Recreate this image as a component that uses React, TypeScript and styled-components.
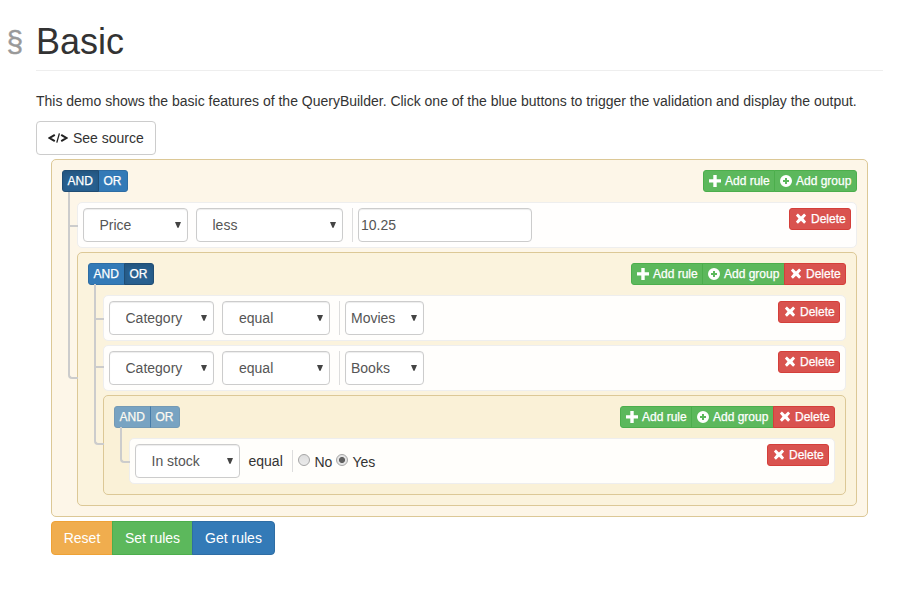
import React, { useState } from "react";
import styled, { createGlobalStyle, css } from "styled-components";

const GlobalStyle = createGlobalStyle`
  *, *::before, *::after { box-sizing: border-box; }
  body {
    margin: 0;
    background: #fff;
    color: #333;
    font: 14px/20px "Liberation Sans", Arial, sans-serif;
  }
  button, input, select { font: inherit; }
`;

const Page = styled.main`
  width: 898px;
  padding: 21px 15px 37px 36px;
`;

const Title = styled.h1`
  position: relative;
  margin: 0;
  height: 50px;
  width: 847px;
  border-bottom: 1px solid #eee;
  font-size: 36px;
  font-weight: 400;
  line-height: 41px;
`;

const Anchor = styled.span`
  position: absolute;
  left: -29.5px;
  top: 0;
  color: #999;
  font-size: 30px;
  -webkit-text-stroke: 0.4px #999;
`;

const Intro = styled.p`
  margin: 20px 0 10px;
  letter-spacing: -0.008px;
  white-space: nowrap;
`;

const SourceButton = styled.button`
  display: flex;
  align-items: center;
  gap: 5px;
  width: 120px;
  height: 34px;
  padding: 0 0 0 11px;
  border: 1px solid #ccc;
  border-radius: 4px;
  background: #fff;
  color: #333;
  white-space: nowrap;
`;

const Builder = styled.div`
  width: 817px;
  margin: 4px 0 4px 15px;
`;

const connector = css`
  position: relative;
  &::before,
  &::after {
    content: "";
    position: absolute;
    left: -10px;
    width: 10px;
    height: calc(50% + 4px);
    border: 0 solid #ccc;
  }
  &::before {
    top: -4px;
    border-width: 0 0 2px 2px;
  }
  &::after {
    top: 50%;
    border-left-width: 2px;
  }
  &:first-child::before {
    top: -12px;
    height: calc(50% + 14px);
  }
  &:last-child::before {
    border-radius: 0 0 0 4px;
  }
  &:last-child::after {
    display: none;
  }
`;

const GroupBox = styled.section<{ $nested?: boolean }>`
  padding: 10px;
  border: 1px solid #dcc896;
  border-radius: 5px;
  background: rgba(250, 240, 210, 0.5);
  ${(p) => p.$nested && connector}
`;

const RootGroup = styled(GroupBox)`
  background: #fdf6e8;
`;

const GroupHeader = styled.header`
  display: flex;
  justify-content: space-between;
  height: 22px;
  margin-bottom: 10px;
`;

const RuleList = styled.div`
  display: flex;
  flex-direction: column;
  gap: 4px;
  padding-left: 15px;
`;

const RuleBox = styled.div`
  ${connector}
  display: flex;
  align-items: flex-start;
  height: 46px;
  padding: 5px;
  border: 1px solid #eee;
  border-radius: 5px;
  background: rgba(255, 255, 255, 0.9);
`;

const ButtonGroup = styled.div<{ $radius: number }>`
  display: flex;
  & > * + * {
    margin-left: -1px;
  }
  & > * {
    border-radius: 0;
  }
  & > :first-child {
    border-radius: ${(p) => p.$radius}px 0 0 ${(p) => p.$radius}px;
  }
  & > :last-child {
    border-radius: 0 ${(p) => p.$radius}px ${(p) => p.$radius}px 0;
  }
`;

const tones = {
  primary: "background:#337ab7;border-color:#2e6da4;",
  success: "background:#5cb85c;border-color:#4cae4c;",
  danger: "background:#d9534f;border-color:#d43f3a;",
  warning: "background:#f0ad4e;border-color:#eea236;",
};
type Tone = keyof typeof tones;

const SmallButton = styled.button<{ $tone: Tone; $width: number }>`
  position: relative;
  display: flex;
  align-items: center;
  gap: 4px;
  width: ${(p) => p.$width}px;
  height: 22px;
  padding: 0 0 0 5px;
  border: 1px solid;
  color: #fff;
  font-size: 12px;
  line-height: 18px;
  white-space: nowrap;
  -webkit-text-stroke: 0.25px #fff;
  ${(p) => tones[p.$tone]}
`;

const ConditionButton = styled(SmallButton)<{ $active: boolean }>`
  padding: 0 0 0 4.5px;
  ${(p) =>
    p.$active &&
    !p.disabled &&
    "z-index:2;background:#286090;border-color:#204d74;box-shadow:inset 0 3px 5px rgba(0,0,0,.125);"}
  &:disabled {
    opacity: 0.65;
  }
`;

const RuleDelete = styled(SmallButton)`
  margin-left: auto;
  border-radius: 3px;
`;

const ActionButton = styled.button<{ $tone: Tone; $width: number }>`
  width: ${(p) => p.$width}px;
  height: 34px;
  padding: 0;
  border: 1px solid;
  color: #fff;
  white-space: nowrap;
  ${(p) => tones[p.$tone]}
`;

const fieldStyle = css`
  height: 34px;
  border: 1px solid #ccc;
  border-radius: 4px;
  background: #fff;
  color: #555;
  box-shadow: inset 0 1px 1px rgba(0, 0, 0, 0.075);
  outline: none;
`;

const SelectWrap = styled.span`
  position: relative;
  display: flex;
  margin-right: 8px;
  svg {
    position: absolute;
    right: 6px;
    top: 14px;
    pointer-events: none;
  }
`;

const SelectField = styled.select<{ $width: number; $indent: number }>`
  ${fieldStyle}
  appearance: none;
  width: ${(p) => p.$width}px;
  padding: 0 0 0 ${(p) => p.$indent}px;
`;

const NumberField = styled.input`
  ${fieldStyle}
  width: 174px;
  padding: 0 2px;
`;

const ValueCell = styled.div<{ $short?: boolean }>`
  display: flex;
  align-items: center;
  height: ${(p) => (p.$short ? 22 : 34)}px;
  margin-top: ${(p) => (p.$short ? 6 : 0)}px;
  margin-left: 1px;
  padding-left: 5px;
  border-left: 1px solid #ddd;
`;

const OperatorText = styled.span`
  width: 43px;
  padding-left: 0.5px;
  line-height: 34px;
`;

const RadioLabel = styled.label`
  display: flex;
  gap: 4.5px;
  height: 22px;
  padding-top: 2px;
  margin-right: 3.5px;
`;

const Radio = styled.input`
  appearance: none;
  width: 12px;
  height: 12px;
  margin: 2px 0 0;
  border: 1px solid #a5a5a5;
  border-radius: 50%;
  background: linear-gradient(#dedede, #ebebeb);
  &:checked {
    background: radial-gradient(circle, #606060 0 2.7px, #e4e4e4 3.3px);
  }
`;

function Icon({ kind }: { kind: "plus" | "plusCircle" | "remove" }) {
  return (
    <svg width="12" height="12" viewBox="0 0 12 12" fill="#fff" aria-hidden="true">
      {kind === "plus" && <path d="M4.3 0h3.4v4.3H12v3.3H7.7V12H4.3V7.6H0V4.3h4.3z" />}
      {kind === "plusCircle" && (
        <path
          fillRule="evenodd"
          d="M6 0a6 6 0 1 1 0 12A6 6 0 0 1 6 0zM5 3v2H3v2h2v2h2V7h2V5H7V3z"
        />
      )}
      {kind === "remove" && (
        <path d="M2.9.5 6 3.4 9.1.5l2 2L8.5 5.6l2.6 3.1-2 2L6 7.8l-3.1 2.9-2-2 2.6-3.1L.9 2.5z" />
      )}
    </svg>
  );
}

function CodeIcon() {
  return (
    <svg width="20" height="10" viewBox="0 0 20 10" fill="none" stroke="#222" aria-hidden="true">
      <path d="M6.8 1.8 1.6 5l5.2 3.2M13.2 1.8 18.4 5l-5.2 3.2" strokeWidth="2" />
      <path d="M11.4.3 8.8 9.7" strokeWidth="1.3" />
    </svg>
  );
}

type SelectProps = { value: string; width: number; indent?: number };

function Select({ value, width, indent = 15.5 }: SelectProps) {
  return (
    <SelectWrap>
      <SelectField $width={width} $indent={indent} defaultValue={value}>
        <option>{value}</option>
      </SelectField>
      <svg width="7" height="6" viewBox="0 0 7 6" fill="#444">
        <path d="M0 0h6L3.6 5.8H2.4z" />
      </svg>
    </SelectWrap>
  );
}

function Rule({ children }: { children: React.ReactNode }) {
  return (
    <RuleBox>
      {children}
      <RuleDelete $tone="danger" $width={62}>
        <Icon kind="remove" /> Delete
      </RuleDelete>
    </RuleBox>
  );
}

type GroupProps = {
  condition: "AND" | "OR";
  root?: boolean;
  locked?: boolean;
  children: React.ReactNode;
};

function Group({ condition, root, locked, children }: GroupProps) {
  const [current, setCurrent] = useState(condition);
  const Box = root ? RootGroup : GroupBox;
  return (
    <Box $nested={!root}>
      <GroupHeader>
        <ButtonGroup $radius={3}>
          {(["AND", "OR"] as const).map((name) => (
            <ConditionButton
              key={name}
              $tone="primary"
              $width={name === "AND" ? 37 : 30}
              $active={current === name}
              disabled={locked}
              onClick={() => setCurrent(name)}
            >
              {name}
            </ConditionButton>
          ))}
        </ButtonGroup>
        <ButtonGroup $radius={3}>
          <SmallButton $tone="success" $width={72}>
            <Icon kind="plus" /> Add rule
          </SmallButton>
          <SmallButton $tone="success" $width={83}>
            <Icon kind="plusCircle" /> Add group
          </SmallButton>
          {!root && (
            <SmallButton $tone="danger" $width={62}>
              <Icon kind="remove" /> Delete
            </SmallButton>
          )}
        </ButtonGroup>
      </GroupHeader>
      <RuleList>{children}</RuleList>
    </Box>
  );
}

export default function App() {
  return (
    <Page>
      <GlobalStyle />
      <Title>
        <Anchor>§</Anchor>Basic
      </Title>
      <Intro>
        This demo shows the basic features of the QueryBuilder. Click one of the blue buttons to
        trigger the validation and display the output.
      </Intro>
      <SourceButton>
        <CodeIcon /> See source
      </SourceButton>
      <Builder>
        <Group condition="AND" root>
          <Rule>
            <Select value="Price" width={105} />
            <Select value="less" width={147} />
            <ValueCell>
              <NumberField defaultValue="10.25" />
            </ValueCell>
          </Rule>
          <Group condition="OR">
            {["Movies", "Books"].map((category) => (
              <Rule key={category}>
                <Select value="Category" width={105} />
                <Select value="equal" width={108} indent={16} />
                <ValueCell>
                  <Select value={category} width={79} indent={5} />
                </ValueCell>
              </Rule>
            ))}
            <Group condition="AND" locked>
              <Rule>
                <Select value="In stock" width={105} />
                <OperatorText>equal</OperatorText>
                <ValueCell $short>
                  <RadioLabel>
                    <Radio type="radio" name="in-stock" /> No
                  </RadioLabel>
                  <RadioLabel>
                    <Radio type="radio" name="in-stock" defaultChecked /> Yes
                  </RadioLabel>
                </ValueCell>
              </Rule>
            </Group>
          </Group>
        </Group>
      </Builder>
      <Builder>
        <ButtonGroup $radius={4}>
          <ActionButton $tone="warning" $width={62}>Reset</ActionButton>
          <ActionButton $tone="success" $width={81}>Set rules</ActionButton>
          <ActionButton $tone="primary" $width={83}>Get rules</ActionButton>
        </ButtonGroup>
      </Builder>
    </Page>
  );
}
